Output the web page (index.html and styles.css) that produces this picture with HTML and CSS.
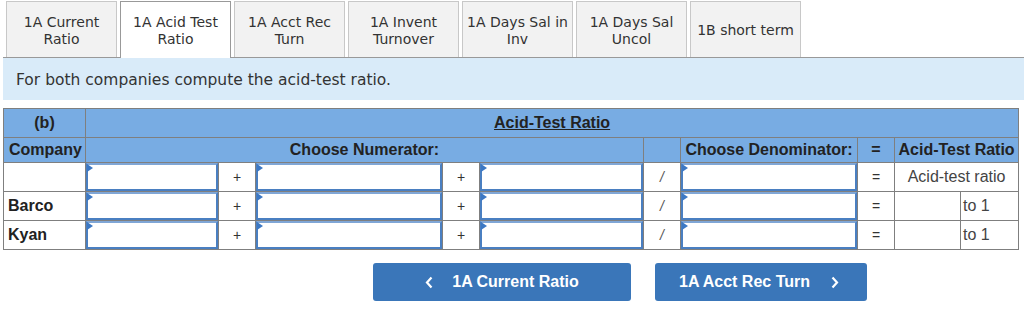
FILE: index.html
```html
<!DOCTYPE html>
<html>
<head>
<meta charset="utf-8">
<link rel="stylesheet" href="styles.css">
</head>
<body>
<div class="page">
  <div class="tabs">
    <div class="tab">1A Current<br>Ratio</div>
    <div class="tab active">1A Acid Test<br>Ratio</div>
    <div class="tab">1A Acct Rec<br>Turn</div>
    <div class="tab">1A Invent<br>Turnover</div>
    <div class="tab">1A Days Sal in<br>Inv</div>
    <div class="tab">1A Days Sal<br>Uncol</div>
    <div class="tab">1B short term</div>
  </div>
  <div class="instructions">For both companies compute the acid-test ratio.</div>

  <table class="grid">
    <colgroup>
      <col class="c-company">
      <col class="c-in1">
      <col class="c-op">
      <col class="c-in2">
      <col class="c-op">
      <col class="c-in3">
      <col class="c-op">
      <col class="c-den">
      <col class="c-op">
      <col class="c-ra">
      <col class="c-rb">
    </colgroup>
    <tr class="h1">
      <th>(b)</th>
      <th colspan="10"><span class="u">Acid-Test Ratio</span></th>
    </tr>
    <tr class="h2">
      <th class="left">Company</th>
      <th colspan="5">Choose Numerator:</th>
      <th></th>
      <th>Choose Denominator:</th>
      <th>=</th>
      <th colspan="2">Acid-Test Ratio</th>
    </tr>
    <tr>
      <td class="name"></td>
      <td class="inp"><div class="box"></div></td>
      <td class="op">+</td>
      <td class="inp"><div class="box"></div></td>
      <td class="op">+</td>
      <td class="inp"><div class="box"></div></td>
      <td class="op slash">/</td>
      <td class="inp"><div class="box"></div></td>
      <td class="op">=</td>
      <td class="label" colspan="2">Acid-test ratio</td>
    </tr>
    <tr>
      <td class="name">Barco</td>
      <td class="inp"><div class="box"></div></td>
      <td class="op">+</td>
      <td class="inp"><div class="box"></div></td>
      <td class="op">+</td>
      <td class="inp"><div class="box"></div></td>
      <td class="op slash">/</td>
      <td class="inp"><div class="box"></div></td>
      <td class="op">=</td>
      <td class="res"></td>
      <td class="to">to 1</td>
    </tr>
    <tr>
      <td class="name">Kyan</td>
      <td class="inp"><div class="box"></div></td>
      <td class="op">+</td>
      <td class="inp"><div class="box"></div></td>
      <td class="op">+</td>
      <td class="inp"><div class="box"></div></td>
      <td class="op slash">/</td>
      <td class="inp"><div class="box"></div></td>
      <td class="op">=</td>
      <td class="res"></td>
      <td class="to">to 1</td>
    </tr>
  </table>

  <div class="nav">
    <div class="btn prev">
      <svg width="8" height="13" viewBox="0 0 8 13"><path d="M6.5 1.5 L2 6.5 L6.5 11.5" fill="none" stroke="#fff" stroke-width="2.2"/></svg>
      <span>1A Current Ratio</span>
    </div>
    <div class="btn next">
      <span>1A Acct Rec Turn</span>
      <svg width="8" height="13" viewBox="0 0 8 13"><path d="M1.5 1.5 L6 6.5 L1.5 11.5" fill="none" stroke="#fff" stroke-width="2.2"/></svg>
    </div>
  </div>
</div>
</body>
</html>
```

FILE: styles.css
```css
html, body {
  margin: 0;
  padding: 0;
  background: #fff;
}
.page {
  padding-left: 3px;
  width: 1021px;
}
.tabs {
  display: flex;
  gap: 3px;
  padding: 1px 0 0 3px;
  height: 56px;
  border-bottom: 1px solid #999;
}
.tab {
  box-sizing: border-box;
  width: 111px;
  height: 56px;
  border: 1px solid #c8c8c8;
  border-bottom: none;
  background: #f2f2f2;
  font-family: "DejaVu Sans", Verdana, sans-serif;
  font-size: 14px;
  line-height: 17px;
  color: #333;
  text-align: center;
  display: flex;
  align-items: center;
  justify-content: center;
  padding-top: 2px;
  white-space: nowrap;
}
.tab.active {
  background: #fff;
  border-color: #999;
  height: 57px;
}
.instructions {
  height: 42px;
  background: #d9ebf9;
  font-family: "DejaVu Sans", Verdana, sans-serif;
  font-size: 15.5px;
  color: #333;
  display: flex;
  align-items: center;
  padding-left: 13px;
  padding-top: 1px;
  box-sizing: border-box;
}
.grid {
  margin-top: 8px;
  border-collapse: collapse;
  table-layout: fixed;
  width: 1015px;
  font-family: "Liberation Sans", Arial, sans-serif;
  font-size: 16px;
  color: #222;
}
.c-company { width: 82px; }
.c-in1 { width: 133px; }
.c-op { width: 37px; }
.c-in2 { width: 187px; }
.c-in3 { width: 164px; }
.c-den { width: 177px; }
.c-ra { width: 66px; }
.c-rb { width: 58px; }
.grid th, .grid td {
  border: 1px solid #7f7f7f;
  padding: 0;
}
.grid th {
  background: #78ace3;
  font-weight: bold;
  color: #222;
  text-align: center;
  white-space: nowrap;
}
.grid th.left { text-align: left; padding-left: 5px; }
.h1 th { height: 28px; }
.h2 th { height: 24px; }
.u { text-decoration: underline; }
.grid td { height: 28px; background: #fff; }
.grid td.name {
  font-weight: bold;
  padding-left: 4px;
}
.grid td.op {
  text-align: center;
  color: #333;
  font-size: 14px;
}
.grid td.slash { color: #555; font-style: italic; }
.grid td.label {
  text-align: center;
  color: #444;
  white-space: nowrap;
}
.grid td.to {
  padding-left: 2px;
  color: #444;
}
.box {
  box-sizing: border-box;
  height: 28px;
  border: 2px solid #4a7fc1;
  border-top-color: #7fa6d6;
  background: #fff;
  position: relative;
}
.box::before {
  content: "";
  position: absolute;
  left: -1px;
  top: -1px;
  border-left: 6px solid #3c78c4;
  border-top: 4px solid transparent;
  border-bottom: 4px solid transparent;
}
.nav {
  display: flex;
  gap: 24px;
  padding-left: 370px;
  margin-top: 13px;
}
.btn {
  box-sizing: border-box;
  height: 38px;
  background: #3a76b9;
  border-radius: 3px;
  color: #fff;
  font-family: "Liberation Sans", Arial, sans-serif;
  font-weight: bold;
  font-size: 16px;
  display: flex;
  align-items: center;
  justify-content: center;
  gap: 19px;
}
.btn.prev { width: 258px; }
.btn.next { width: 212px; gap: 21px; padding-right: 4px; }
```
